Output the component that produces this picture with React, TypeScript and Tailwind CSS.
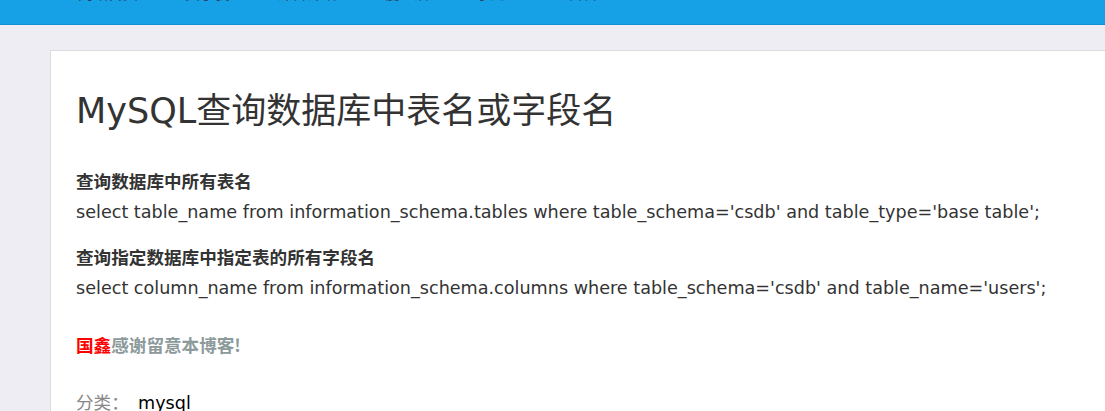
export default function App() {
  const nav = ['网站首页', '关于我', '碎言碎语', '慢生活', '学无止', '留言'];

  return (
    <div className="min-h-screen bg-[#eeedf3] font-['DejaVu_Sans','Noto_Sans_CJK_SC',sans-serif] text-[#333]">
      <header className="h-[25px] overflow-hidden border-b border-[#1290d0] bg-[#16a0e6]">
        <ul className="-mt-[13px] flex gap-[47px] pl-[78px] text-[15px] leading-[15px] text-[#24435a]">
          {nav.map((item) => (
            <li key={item}>{item}</li>
          ))}
        </ul>
      </header>

      <div className="pl-[50px] pt-[25px]">
        <div className="min-h-[400px] border-l border-t border-[#dcdcdc] bg-white pl-[25px] pt-[39px]">
          <h1 className="mb-[34px] text-[35px] leading-[42px] font-normal">MySQL查询数据库中表名或字段名</h1>

          <p className="mb-[15px] text-[17.6px] leading-[30px]">
            <strong className="font-['Noto_Sans_CJK_SC',sans-serif] font-bold">查询数据库中所有表名</strong>
            <br />
            select table_name from information_schema.tables where table_schema='csdb' and table_type='base table';
          </p>

          <p className="mb-[27px] text-[17.6px] leading-[30px]">
            <strong className="font-['Noto_Sans_CJK_SC',sans-serif] font-bold">查询指定数据库中指定表的所有字段名</strong>
            <br />
            select column_name from information_schema.columns where table_schema='csdb' and table_name='users';
          </p>

          <p className="mb-[28px] font-['Noto_Sans_CJK_SC',sans-serif] text-[17.6px] leading-[30px] font-bold text-[#8c9a9b]">
            <span className="text-[#ff0000]">国鑫</span>感谢留意本博客!
          </p>

          <div className="flex items-center text-[17.6px] leading-[30px]">
            <span className="w-[62px] text-[#888]">分类：</span>
            <span className="text-black">mysql</span>
          </div>
        </div>
      </div>
    </div>
  );
}
